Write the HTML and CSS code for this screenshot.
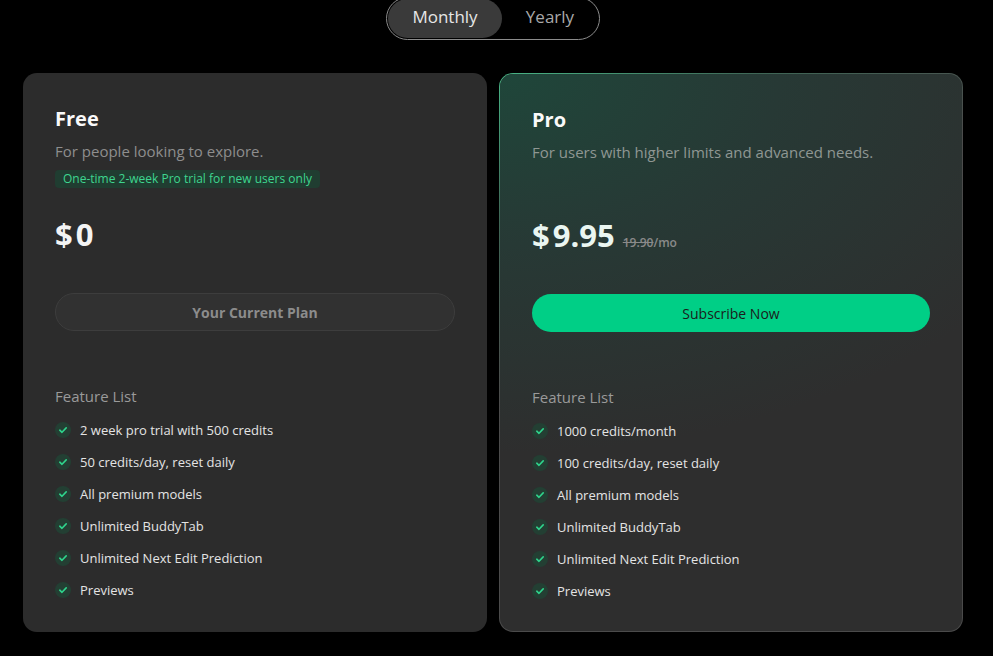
FILE: index.html
```html
<!DOCTYPE html>
<html lang="en">
<head>
  <meta charset="UTF-8">
  <title>Pricing</title>
  <link rel="stylesheet" href="styles.css">
</head>
<body>
  <div class="toggle-wrap">
    <div class="toggle">
      <button class="toggle-btn active">Monthly</button>
      <button class="toggle-btn">Yearly</button>
    </div>
  </div>

  <div class="plans">
    <div class="card">
      <div class="card-head">
        <h3 class="plan-name">Free</h3>
        <p class="plan-desc">For people looking to explore.</p>
        <span class="badge">One-time 2-week Pro trial for new users only</span>
      </div>
      <div class="price"><span class="cur">$</span>0</div>
      <button class="plan-btn current">Your Current Plan</button>
      <div class="features-title">Feature List</div>
      <ul class="features">
        <li><span class="check"><svg viewBox="0 0 16 16"><path d="M4.8 8.2l2.2 2.1 4.2-4.4"/></svg></span>2 week pro trial with 500 credits</li>
        <li><span class="check"><svg viewBox="0 0 16 16"><path d="M4.8 8.2l2.2 2.1 4.2-4.4"/></svg></span>50 credits/day, reset daily</li>
        <li><span class="check"><svg viewBox="0 0 16 16"><path d="M4.8 8.2l2.2 2.1 4.2-4.4"/></svg></span>All premium models</li>
        <li><span class="check"><svg viewBox="0 0 16 16"><path d="M4.8 8.2l2.2 2.1 4.2-4.4"/></svg></span>Unlimited BuddyTab</li>
        <li><span class="check"><svg viewBox="0 0 16 16"><path d="M4.8 8.2l2.2 2.1 4.2-4.4"/></svg></span>Unlimited Next Edit Prediction</li>
        <li><span class="check"><svg viewBox="0 0 16 16"><path d="M4.8 8.2l2.2 2.1 4.2-4.4"/></svg></span>Previews</li>
      </ul>
    </div>

    <div class="card pro">
      <div class="card-head">
        <h3 class="plan-name">Pro</h3>
        <p class="plan-desc">For users with higher limits and advanced needs.</p>
      </div>
      <div class="price"><span class="cur">$</span>9.95<span class="old"><s>19.90</s>/mo</span></div>
      <button class="plan-btn subscribe">Subscribe Now</button>
      <div class="features-title">Feature List</div>
      <ul class="features">
        <li><span class="check"><svg viewBox="0 0 16 16"><path d="M4.8 8.2l2.2 2.1 4.2-4.4"/></svg></span>1000 credits/month</li>
        <li><span class="check"><svg viewBox="0 0 16 16"><path d="M4.8 8.2l2.2 2.1 4.2-4.4"/></svg></span>100 credits/day, reset daily</li>
        <li><span class="check"><svg viewBox="0 0 16 16"><path d="M4.8 8.2l2.2 2.1 4.2-4.4"/></svg></span>All premium models</li>
        <li><span class="check"><svg viewBox="0 0 16 16"><path d="M4.8 8.2l2.2 2.1 4.2-4.4"/></svg></span>Unlimited BuddyTab</li>
        <li><span class="check"><svg viewBox="0 0 16 16"><path d="M4.8 8.2l2.2 2.1 4.2-4.4"/></svg></span>Unlimited Next Edit Prediction</li>
        <li><span class="check"><svg viewBox="0 0 16 16"><path d="M4.8 8.2l2.2 2.1 4.2-4.4"/></svg></span>Previews</li>
      </ul>
    </div>
  </div>
</body>
</html>
```

FILE: styles.css
```css
* {
  box-sizing: border-box;
}
body {
  margin: 0;
  background: #000;
  font-family: "Open Sans", "Noto Sans", sans-serif;
  color: #f2f2f2;
  overflow: hidden;
}
.toggle-wrap {
  display: flex;
  justify-content: center;
  padding-right: 7px;
  margin-top: -3px;
}
.toggle {
  display: flex;
  border: 1px solid #8c8c8c;
  border-radius: 999px;
  padding: 1px;
}
.toggle-btn {
  font-family: inherit;
  font-size: 17px;
  height: 39px;
  padding: 0 0 4px;
  border: none;
  border-radius: 999px;
  background: transparent;
  color: #a9a9a9;
  cursor: pointer;
}
.toggle-btn.active {
  width: 114px;
  background: #3a3a3a;
  color: #e6e6e6;
}
.toggle-btn:not(.active) {
  width: 96px;
}
.plans {
  display: grid;
  grid-template-columns: 464px 464px;
  gap: 12px;
  padding-left: 23px;
  margin-top: 33px;
}
.card {
  height: 559px;
  background: #2c2c2c;
  border-radius: 14px;
  padding: 34px 32px 0;
}
.card.pro {
  border: 1px solid transparent;
  background:
    radial-gradient(ellipse 620px 380px at 0 0, #1f463a 0%, #273935 45%, rgba(46,46,46,0) 100%) padding-box,
    linear-gradient(#2e2e2e, #2e2e2e) padding-box,
    linear-gradient(150deg, #48b586 0%, #3f6656 18%, #4c4c4c 40%, #4a4a4a 100%) border-box;
}
.card-head {
  height: 81px;
}
.plan-name {
  margin: 0;
  font-size: 20px;
  line-height: 24px;
  font-weight: 700;
  color: #fafafa;
}
.plan-desc {
  margin: 10px 0 0;
  font-size: 15px;
  line-height: 20px;
  color: #8e8e8e;
}
.pro .plan-desc {
  color: #8f9793;
}
.badge {
  display: inline-block;
  margin-top: 9px;
  padding: 0 8px;
  font-size: 12px;
  line-height: 18px;
  border-radius: 4px;
  background: #203d31;
  color: #3ed68f;
}
.price {
  display: flex;
  align-items: baseline;
  height: 36px;
  margin-top: 28px;
  font-size: 31px;
  line-height: 36px;
  font-weight: 700;
  color: #f4f4f4;
}
.pro .price {
  color: #eaf6f1;
}
.cur {
  margin-right: 3px;
}
.old {
  margin-left: 8px;
  font-size: 12px;
  line-height: 16px;
  font-weight: 600;
  color: #8a8a8a;
}
.plan-btn {
  display: block;
  width: 400px;
  height: 38px;
  margin-top: 41px;
  border-radius: 999px;
  font-family: inherit;
  font-size: 14px;
}
.plan-btn.current {
  background: #313131;
  border: 1px solid #3d3d3d;
  color: #8c8c8c;
  font-weight: 700;
}
.plan-btn.subscribe {
  width: 398px;
  background: #00cf86;
  border: none;
  color: #1b1b1b;
  font-weight: 500;
}
.features-title {
  margin-top: 55px;
  font-size: 15px;
  line-height: 20px;
  color: #9a9a9a;
}
.features {
  list-style: none;
  margin: 14px 0 0;
  padding: 0;
  display: flex;
  flex-direction: column;
  gap: 12px;
}
.features li {
  display: flex;
  align-items: center;
  gap: 9px;
  font-size: 13px;
  line-height: 20px;
  color: #e4e4e4;
}
.check {
  width: 16px;
  height: 16px;
  border-radius: 50%;
  background: #233f33;
  display: flex;
}
.check svg {
  width: 16px;
  height: 16px;
  fill: none;
  stroke: #2fd48c;
  stroke-width: 1.6;
  stroke-linecap: round;
  stroke-linejoin: round;
}
```
